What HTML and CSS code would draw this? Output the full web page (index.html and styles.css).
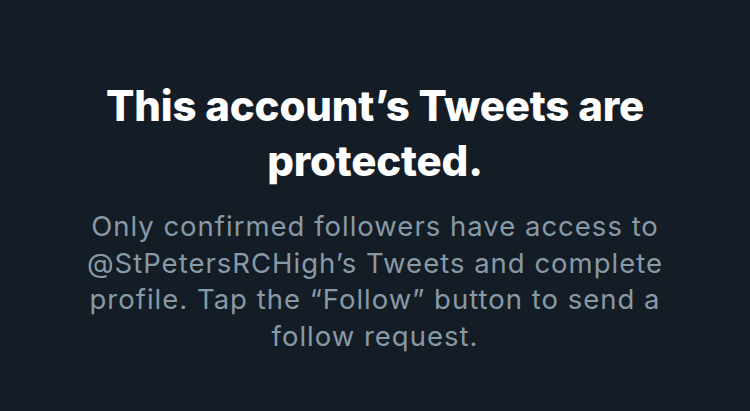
FILE: index.html
```html
<!DOCTYPE html>
<html lang="en">
<head>
<meta charset="utf-8">
<title>Protected account</title>
<link rel="stylesheet" href="styles.css">
</head>
<body>
<main class="notice">
  <h1 class="notice-title">This account’s Tweets are<br>protected.</h1>
  <p class="notice-text">Only confirmed followers have access to<br>@StPetersRCHigh’s Tweets and complete<br>profile. Tap the “Follow” button to send a<br>follow request.</p>
</main>
</body>
</html>
```
FILE: styles.css
```css
html, body {
  margin: 0;
  padding: 0;
  background: #141d26;
  height: 100%;
}
body {
  font-family: Inter, "Noto Sans", "Liberation Sans", sans-serif;
}
.notice {
  display: flex;
  flex-direction: column;
  align-items: center;
  text-align: center;
  padding-top: 78px;
}
.notice-title {
  margin: 0;
  color: #ffffff;
  font-size: 42px;
  font-weight: 800;
  line-height: 55px;
  letter-spacing: -0.2px;
}
.notice-text {
  margin: 20px 0 0;
  color: #8899a6;
  font-size: 27.5px;
  font-weight: 400;
  line-height: 36.5px;
  letter-spacing: 1px;
}
```
